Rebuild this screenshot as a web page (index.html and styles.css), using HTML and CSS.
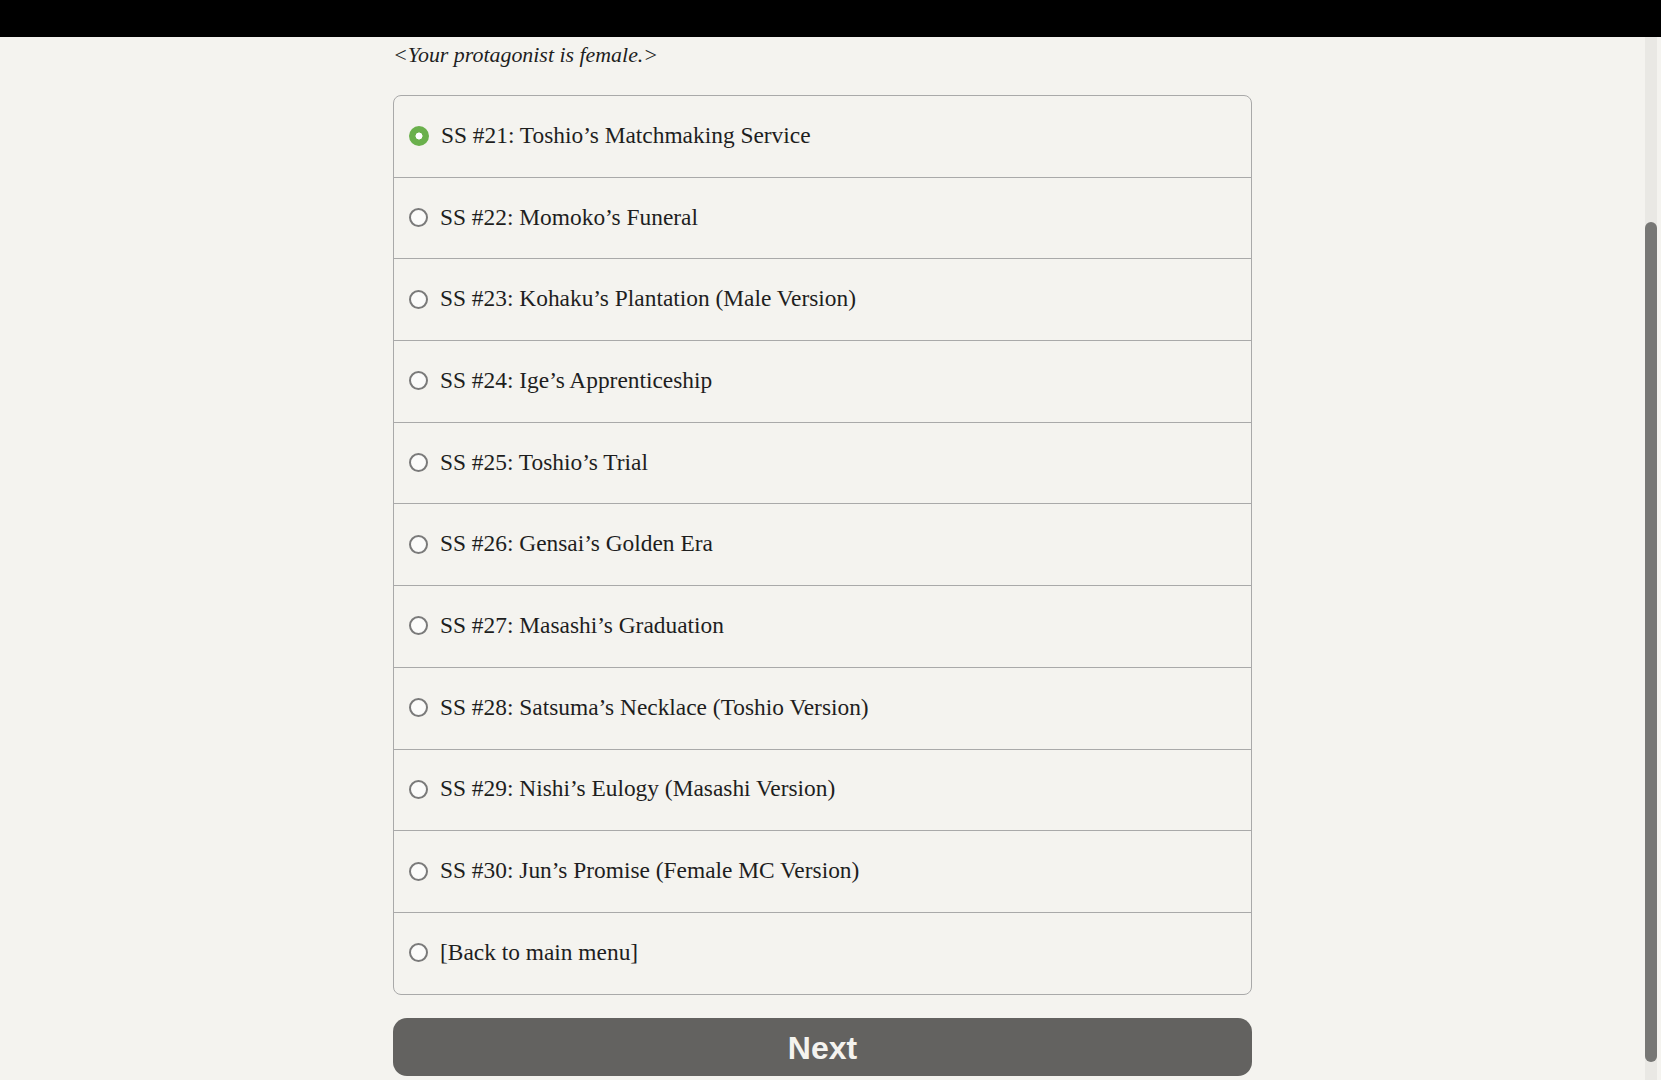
FILE: index.html
```html
<!DOCTYPE html>
<html lang="en">
<head>
<meta charset="utf-8">
<title>Choice</title>
<link rel="stylesheet" href="styles.css">
</head>
<body>
<div class="topbar"></div>
<main class="page">
  <div class="column">
    <p class="note">&lt;Your protagonist is female.&gt;</p>
    <ul class="choices">
      <li class="choice"><span class="radio checked"></span><span class="label">SS #21: Toshio’s Matchmaking Service</span></li>
      <li class="choice"><span class="radio"></span><span class="label">SS #22: Momoko’s Funeral</span></li>
      <li class="choice"><span class="radio"></span><span class="label">SS #23: Kohaku’s Plantation (Male Version)</span></li>
      <li class="choice"><span class="radio"></span><span class="label">SS #24: Ige’s Apprenticeship</span></li>
      <li class="choice"><span class="radio"></span><span class="label">SS #25: Toshio’s Trial</span></li>
      <li class="choice"><span class="radio"></span><span class="label">SS #26: Gensai’s Golden Era</span></li>
      <li class="choice"><span class="radio"></span><span class="label">SS #27: Masashi’s Graduation</span></li>
      <li class="choice"><span class="radio"></span><span class="label">SS #28: Satsuma’s Necklace (Toshio Version)</span></li>
      <li class="choice"><span class="radio"></span><span class="label">SS #29: Nishi’s Eulogy (Masashi Version)</span></li>
      <li class="choice"><span class="radio"></span><span class="label">SS #30: Jun’s Promise (Female MC Version)</span></li>
      <li class="choice"><span class="radio"></span><span class="label">[Back to main menu]</span></li>
    </ul>
    <button class="next">Next</button>
  </div>
</main>
<div class="scrollbar"><div class="thumb"></div></div>
</body>
</html>
```
FILE: styles.css
```css
html, body {
  margin: 0;
  padding: 0;
  height: 100%;
  overflow: hidden;
}
body {
  background: #f4f3ef;
  font-family: "Liberation Serif", "Times New Roman", serif;
  color: #1e1e1e;
}
.topbar {
  height: 37px;
  background: #000;
}
.page {
  width: 1645px;
  display: flex;
  justify-content: center;
}
.column {
  width: 859px;
  display: flex;
  flex-direction: column;
}
.note {
  margin: 3px 0 0 0;
  font-style: italic;
  font-size: 21.9px;
  line-height: 30px;
  color: #1e1e1e;
}
.choices {
  list-style: none;
  margin: 25px 0 0 0;
  padding: 0;
  border: 1.5px solid #a9a9a9;
  border-radius: 8px;
}
.choice {
  height: 80.7px;
  display: flex;
  align-items: center;
  padding-left: 15px;
  border-bottom: 1px solid #a9a9a9;
}
.choice:last-child {
  border-bottom: none;
}
.radio {
  width: 15px;
  height: 15px;
  border: 2.5px solid #7a7a7a;
  border-radius: 50%;
  background: #fbfbfa;
  flex: none;
  margin-right: 11px;
  margin-top: -1px;
}
.radio.checked {
  border: none;
  width: 20px;
  height: 20px;
  background: radial-gradient(circle, #fff 0 3.2px, #6ab04c 3.8px);
}
.label {
  font-size: 23.4px;
  color: #1e1e1e;
  margin-bottom: 2px;
  margin-left: 1px;
}
.next {
  margin-top: 23px;
  height: 58px;
  border: none;
  border-radius: 14px;
  background: #636260;
  color: #f4f3ef;
  font-family: "Liberation Sans", Arial, sans-serif;
  font-weight: bold;
  font-size: 32px;
  padding: 3px 0 0 0;
}
.scrollbar {
  position: fixed;
  top: 37px;
  right: 4px;
  width: 12px;
  bottom: 0;
  background: #e9e8e4;
}
.thumb {
  position: absolute;
  left: 0;
  right: 0;
  top: 185px;
  height: 840px;
  background: #777775;
  border-radius: 6px;
}
```
